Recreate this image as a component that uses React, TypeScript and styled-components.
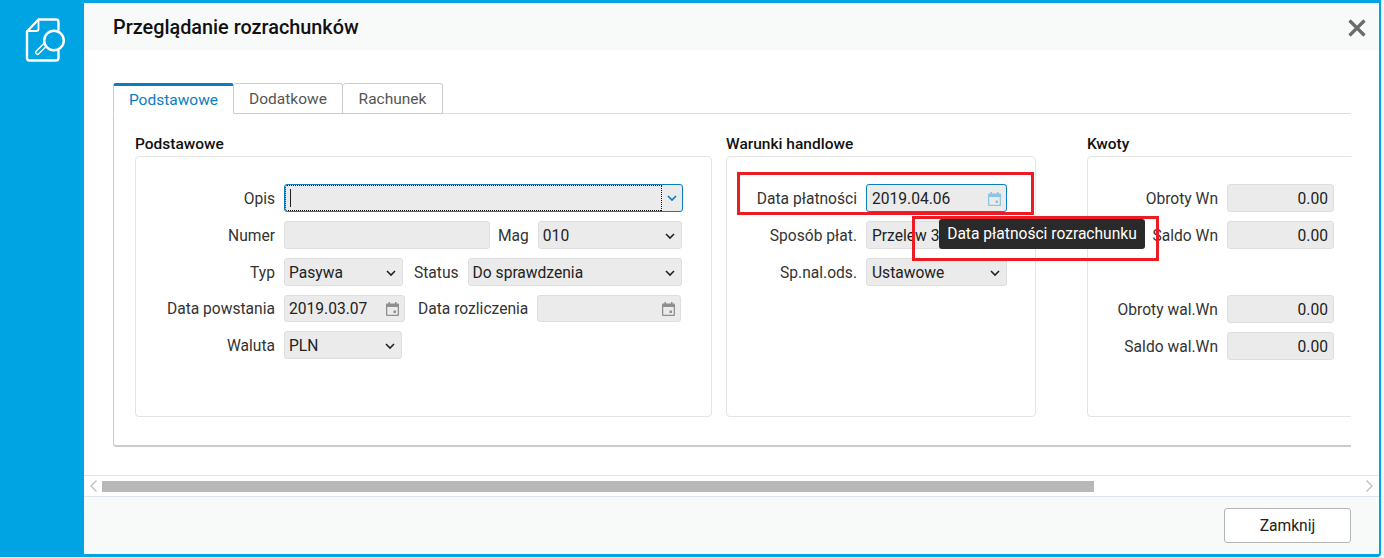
import React from "react";
import styled, { createGlobalStyle } from "styled-components";

const Global = createGlobalStyle`
  html, body { margin: 0; padding: 0; background: #f2f4f5; overflow: hidden; }
  body { font-family: Roboto, "Liberation Sans", sans-serif; }
`;

const Screen = styled.div`
  width: 1381px;
  height: 557px;
  display: flex;
  background: #00a4e2;
  border-radius: 0 0 4px 0;
  padding: 3px 2px 3px 0;
  box-sizing: border-box;
  position: relative;
  overflow: hidden;
`;
const Rail = styled.aside`
  width: 84px;
  flex: none;
  display: flex;
  justify-content: flex-start;
  padding: 15px 0 0 25px;
  box-sizing: border-box;
`;
const Modal = styled.main`
  flex: 1;
  min-width: 0;
  display: flex;
  flex-direction: column;
  background: #fff;
  border-radius: 3px 0 3px 3px;
`;
const Header = styled.header`
  height: 47px;
  flex: none;
  background: #f8fafa;
  display: flex;
  align-items: center;
  justify-content: space-between;
  padding: 2px 13px 0 29px;
  box-sizing: border-box;
`;
const Title = styled.h1`
  margin: 0;
  font-size: 19.85px;
  font-weight: 500;
  color: #111;
`;
const Content = styled.div`
  flex: 1;
  min-height: 0;
  padding: 33px 28px 0 29px;
`;
const Clip = styled.div`
  overflow: hidden;
  height: 100%;
`;
const TabBar = styled.div`
  display: flex;
  height: 30px;
`;
const Tab = styled.div<{ $active?: boolean; $w: number }>`
  width: ${(p) => p.$w}px;
  box-sizing: border-box;
  display: flex;
  align-items: center;
  justify-content: center;
  font-size: 15.5px;
  border-radius: 3px 3px 0 0;
  position: relative;
  z-index: 1;
  background: #fff;
  color: ${(p) => (p.$active ? "#0a7cc0" : "#555")};
  border: 1px solid #cbcbcb;
  border-left-width: ${(p) => (p.$active ? "1px" : "0")};
  border-top: ${(p) => (p.$active ? "3px solid #0a7cc0" : "1px solid #cbcbcb")};
  border-right-width: 1px;
  border-bottom: ${(p) => (p.$active ? "1px solid #fff" : "1px solid #cbcbcb")};
  margin-bottom: -1px;
  height: 31px;
`;
const Panel = styled.section`
  width: 1300px;
  height: 334px;
  box-sizing: border-box;
  border-top: 1px solid #ddd;
  border-left: 1.5px solid #cbcbcb;
  border-bottom: 2px solid #cbcbcb;
  border-radius: 0 0 0 3px;
  display: flex;
  align-items: flex-start;
  padding: 21px 0 0 21px;
`;
const Group = styled.div<{ $w: number; $mr: number }>`
  width: ${(p) => p.$w}px;
  margin-right: ${(p) => p.$mr}px;
  flex: none;
`;
const GroupTitle = styled.h2`
  margin: 0 0 3px;
  height: 18px;
  line-height: 18px;
  font-size: 15.5px;
  font-weight: 500;
  color: #111;
`;
const Card = styled.div`
  height: 261px;
  box-sizing: border-box;
  border: 1.5px solid #e4e4e4;
  border-radius: 4px;
  padding: 27px 0 0;
  display: flex;
  flex-direction: column;
  gap: 9px;
`;
const Row = styled.div`
  display: flex;
  align-items: center;
`;
const Spacer = styled.div`
  height: 28px;
`;
const Label = styled.label<{ $w?: number; $ml?: number }>`
  flex: none;
  ${(p) => (p.$w ? `width: ${p.$w}px;` : "")}
  ${(p) => (p.$ml ? `margin-left: ${p.$ml}px;` : "")}
  text-align: right;
  font-size: 15.6px;
  color: #333;
  margin-right: 9px;
  padding-top: 1px;
  white-space: nowrap;
`;
const Field = styled.div<{ $w: number; $h?: number; $focus?: boolean; $right?: boolean; $pl?: number }>`
  width: ${(p) => p.$w}px;
  height: ${(p) => p.$h ?? 28}px;
  flex: none;
  box-sizing: border-box;
  background: #ebebeb;
  border: 1px solid ${(p) => (p.$focus ? "#0a7cc0" : "#dedede")};
  border-radius: 3px;
  display: flex;
  align-items: center;
  justify-content: ${(p) => (p.$right ? "flex-end" : "space-between")};
  padding: ${(p) => (p.$right ? "1px 5px 0 0" : `1px 5px 0 ${p.$pl ?? 4}px`)};
  font-size: 15.6px;
  color: #222;
  white-space: nowrap;
  overflow: hidden;
`;
const ComboField = styled(Field)`
  padding: 0;
  justify-content: flex-start;
`;
const ComboInput = styled.div`
  flex: 1;
  align-self: stretch;
  border: 1px dotted #111;
  border-radius: 2px 0 0 2px;
  display: flex;
  align-items: center;
  padding-left: 4px;
`;
const Caret = styled.span`
  display: block;
  width: 1px;
  height: 18px;
  background: #222;
`;
const ComboArrow = styled.div`
  width: 20px;
  flex: none;
  display: flex;
  align-items: center;
  justify-content: center;
  color: #0a7cc0;
`;
const Footer = styled.footer`
  height: 58px;
  flex: none;
  box-sizing: border-box;
  background: #f8fafa;
  border-top: 1px solid #dfe5ec;
  display: flex;
  align-items: center;
  justify-content: flex-end;
  padding: 0 28px 0 0;
`;
const Button = styled.button`
  width: 127px;
  height: 35px;
  box-sizing: border-box;
  background: #fff;
  border: 1px solid #b5b5b5;
  border-radius: 3px;
  font-family: inherit;
  font-size: 15.6px;
  color: #222;
`;
const ScrollTrack = styled.div`
  height: 21px;
  flex: none;
  box-sizing: border-box;
  border-top: 1px solid #e2e2e2;
  display: flex;
  align-items: center;
  padding: 0 5px;
  color: #c0c0c0;
`;
const ScrollRail = styled.div`
  flex: 1;
  min-width: 0;
  padding: 0 4px;
`;
const ScrollThumb = styled.div`
  width: 992px;
  height: 11px;
  background: #b8b8b8;
`;
const CloseBtn = styled.button`
  background: none;
  border: 0;
  padding: 0;
  width: 18px;
  height: 18px;
  color: #6c6c6c;
  display: flex;
`;
const Tooltip = styled.div`
  position: absolute;
  left: 939px;
  top: 219px;
  width: 206px;
  height: 30px;
  box-sizing: border-box;
  background: #2a2a2a;
  border-radius: 3px;
  color: #fff;
  font-size: 15.6px;
  display: flex;
  align-items: center;
  justify-content: center;
  white-space: nowrap;
`;
const Mark = styled.div<{ $x: number; $y: number; $w: number; $h: number }>`
  position: absolute;
  left: ${(p) => p.$x}px;
  top: ${(p) => p.$y}px;
  width: ${(p) => p.$w}px;
  height: ${(p) => p.$h}px;
  box-sizing: border-box;
  border: 3px solid #ed1c24;
  pointer-events: none;
`;

const Chevron = () => (
  <svg width="12" height="12" viewBox="0 0 12 12" fill="none" stroke="currentColor" strokeWidth="1.6">
    <path d="M2 4l4 4 4-4" />
  </svg>
);
const Cal = ({ c = "#8f8f8f" }: { c?: string }) => (
  <svg width="13" height="14" viewBox="0 0 13 14" style={{ flex: "none" }}>
    <path fill={c} fillRule="evenodd" d="M2.5 0h1.500v1.500h5V0h1.500v1.500h1.500a1 1 0 0 1 1 1V13a1 1 0 0 1-1 1H1a1 1 0 0 1-1-1V2.500a1 1 0 0 1 1-1h1.500zM1.300 5v7.700h10.400V5zM7.500 8.500h2.500V11H7.500z" />
  </svg>
);
const Select = ({ w, pl, children }: { w: number; pl?: number; children: React.ReactNode }) => (
  <Field $w={w} $pl={pl}>
    <span>{children}</span>
    <Chevron />
  </Field>
);

const AppIcon = () => (
  <svg width="42" height="44" viewBox="0 0 42 44" fill="none" stroke="#fff" strokeWidth="2.4" strokeLinejoin="round" strokeLinecap="round">
    <path d="M33.500 33v7a2.500 2.500 0 0 1-2.500 2.500H4.500A2.500 2.500 0 0 1 2 40V13.500L13.500 1.500H31a2.500 2.500 0 0 1 2.500 2.500v7.500" />
    <path d="M13.500 1.500V11a2 2 0 0 1-2 2H2" strokeWidth="1.800" />
    <circle cx="29" cy="22.500" r="9.800" />
    <path d="M21.500 28l-8 8c-1.200 1.200-3.800-1.200-2.600-2.500l8-8" strokeWidth="1.500" />
  </svg>
);

export default function App() {
  return (
    <>
      <Global />
      <Screen>
        <Rail>
          <AppIcon />
        </Rail>
        <Modal>
          <Header>
            <Title>Przeglądanie rozrachunków</Title>
            <CloseBtn aria-label="Zamknij">
              <svg width="18" height="18" viewBox="0 0 18 18" stroke="currentColor" strokeWidth="3.2">
                <path d="M1.500 1.500l15 15M16.500 1.500l-15 15" />
              </svg>
            </CloseBtn>
          </Header>
          <Content>
            <Clip>
              <TabBar>
                <Tab $active $w={121}>Podstawowe</Tab>
                <Tab $w={109}>Dodatkowe</Tab>
                <Tab $w={100}>Rachunek</Tab>
              </TabBar>
              <Panel>
                <Group $w={577} $mr={14}>
                  <GroupTitle>Podstawowe</GroupTitle>
                  <Card>
                    <Row>
                      <Label $w={139}>Opis</Label>
                      <ComboField $w={399} $focus>
                        <ComboInput>
                          <Caret />
                        </ComboInput>
                        <ComboArrow>
                          <Chevron />
                        </ComboArrow>
                      </ComboField>
                    </Row>
                    <Row>
                      <Label $w={139}>Numer</Label>
                      <Field $w={206} />
                      <Label $ml={8}>Mag</Label>
                      <Select w={144}>010</Select>
                    </Row>
                    <Row>
                      <Label $w={139}>Typ</Label>
                      <Select w={119}>Pasywa</Select>
                      <Label $ml={11}>Status</Label>
                      <Select w={214}>Do sprawdzenia</Select>
                    </Row>
                    <Row>
                      <Label $w={139}>Data powstania</Label>
                      <Field $w={121} $h={27}>
                        <span>2019.03.07</span>
                        <Cal />
                      </Field>
                      <Label $ml={13}>Data rozliczenia</Label>
                      <Field $w={144} $h={27}>
                        <span />
                        <Cal />
                      </Field>
                    </Row>
                    <Row>
                      <Label $w={139}>Waluta</Label>
                      <Select w={118}>PLN</Select>
                    </Row>
                  </Card>
                </Group>
                <Group $w={310} $mr={51}>
                  <GroupTitle>Warunki handlowe</GroupTitle>
                  <Card>
                    <Row>
                      <Label $w={130}>Data płatności</Label>
                      <Field $w={141} $focus $pl={5}>
                        <span>2019.04.06</span>
                        <Cal c="#8cc4e4" />
                      </Field>
                    </Row>
                    <Row>
                      <Label $w={130}>Sposób płat.</Label>
                      <Select w={141} pl={5}>Przelew 30</Select>
                    </Row>
                    <Row>
                      <Label $w={130}>Sp.nal.ods.</Label>
                      <Select w={141} pl={5}>Ustawowe</Select>
                    </Row>
                  </Card>
                </Group>
                <Group $w={400} $mr={0}>
                  <GroupTitle>Kwoty</GroupTitle>
                  <Card>
                    <Row>
                      <Label $w={130}>Obroty Wn</Label>
                      <Field $w={107} $right>0.00</Field>
                    </Row>
                    <Row>
                      <Label $w={130}>Saldo Wn</Label>
                      <Field $w={107} $right>0.00</Field>
                    </Row>
                    <Spacer />
                    <Row>
                      <Label $w={130}>Obroty wal.Wn</Label>
                      <Field $w={107} $right>0.00</Field>
                    </Row>
                    <Row>
                      <Label $w={130}>Saldo wal.Wn</Label>
                      <Field $w={107} $right>0.00</Field>
                    </Row>
                  </Card>
                </Group>
              </Panel>
            </Clip>
          </Content>
          <ScrollTrack>
            <svg width="9" height="14" viewBox="0 0 9 14" fill="none" stroke="currentColor" strokeWidth="1.4"><path d="M7.500 1.500L2 7l5.500 5.500" /></svg>
            <ScrollRail>
              <ScrollThumb />
            </ScrollRail>
            <svg width="9" height="14" viewBox="0 0 9 14" fill="none" stroke="currentColor" strokeWidth="1.4"><path d="M1.500 1.500L7 7l-5.500 5.500" /></svg>
          </ScrollTrack>
          <Footer>
            <Button>Zamknij</Button>
          </Footer>
        </Modal>
        <Tooltip>Data płatności rozrachunku</Tooltip>
        <Mark $x={737} $y={172} $w={297} $h={43} />
        <Mark $x={912} $y={216} $w={247} $h={45} />
      </Screen>
    </>
  );
}
